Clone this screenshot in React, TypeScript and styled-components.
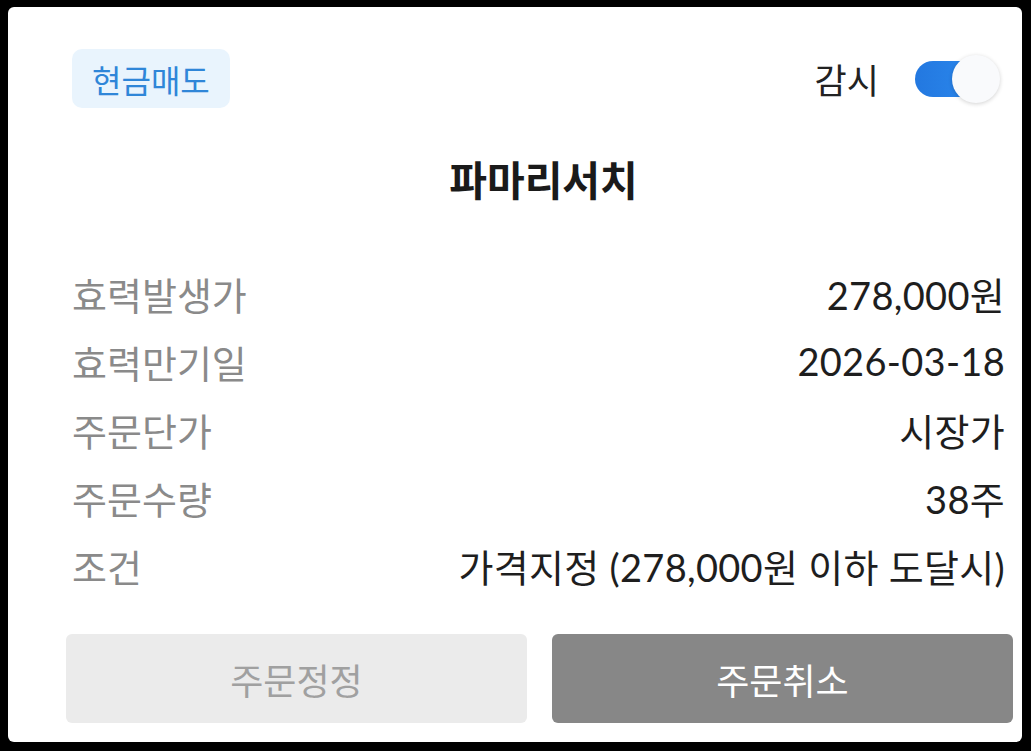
import React, { useState } from "react";
import styled, { createGlobalStyle } from "styled-components";

const GlobalStyle = createGlobalStyle`
  html, body {
    margin: 0;
    padding: 0;
    background: #000;
  }
  body {
    font-family: Lato, "Noto Sans CJK KR", sans-serif;
  }
`;

/*
  Styled Components
*/

const Screen = styled.div`
  width: 1031px;
  height: 751px;
  box-sizing: border-box;
  padding: 7px 9px 9px 8px;
`;

const Card = styled.div`
  height: 100%;
  box-sizing: border-box;
  background: #fff;
  border-radius: 6px;
  padding: 42px 9px 19px 58px;
  display: flex;
  flex-direction: column;
`;

const Body = styled.div`
  flex: 1;
  padding: 0 8px 0 6px;
  display: flex;
  flex-direction: column;
`;

const TopBar = styled.div`
  display: flex;
  align-items: center;
  justify-content: space-between;
  height: 59px;
`;

const Badge = styled.div`
  height: 59px;
  padding: 0 20px;
  display: flex;
  align-items: center;
  border-radius: 10px;
  background: #e9f4fd;
  color: #2f86d8;
  font-size: 32px;
`;

const WatchGroup = styled.div`
  display: flex;
  align-items: center;
  gap: 36px;
  padding-right: 10px;
  font-size: 35px;
  color: #222;
`;

const SwitchTrack = styled.button<{ $on: boolean }>`
  position: relative;
  width: 80px;
  height: 36px;
  padding: 0;
  border: none;
  border-radius: 18px;
  background: ${(p) =>
    p.$on ? "linear-gradient(90deg, #2378e0, #2d8cf0)" : "#d4d4d4"};
  cursor: pointer;
`;

const SwitchKnob = styled.span<{ $on: boolean }>`
  position: absolute;
  top: -6px;
  left: ${(p) => (p.$on ? "37px" : "-2px")};
  width: 48px;
  height: 48px;
  border-radius: 50%;
  background: #f9fafc;
  box-shadow: 0 1px 4px rgba(0, 0, 0, 0.18);
`;

const Title = styled.h1`
  margin: 46px 0 0;
  padding-left: 10px;
  text-align: center;
  font-size: 41px;
  font-weight: 700;
  color: #1a1a1a;
  line-height: 54px;
`;

const InfoList = styled.dl`
  margin: 51px 0 0;
  display: flex;
  flex-direction: column;
`;

const InfoRow = styled.div`
  display: flex;
  justify-content: space-between;
  align-items: center;
  height: 68px;
  font-size: 38px;
`;

const Label = styled.dt`
  color: #8a8a8a;
`;

const Value = styled.dd`
  margin: 0;
  color: #1e1e1e;
  letter-spacing: 0.3px;
`;

const ButtonRow = styled.div`
  display: grid;
  grid-template-columns: 1fr 1fr;
  gap: 25px;
  height: 89px;
`;

const ActionButton = styled.button<{ $primary?: boolean }>`
  border: none;
  border-radius: 6px;
  font-family: inherit;
  font-size: 36px;
  background: ${(p) => (p.$primary ? "#878787" : "#ebebeb")};
  color: ${(p) => (p.$primary ? "#fff" : "#a0a0a0")};
  cursor: pointer;
`;

const rows = [
  { label: "효력발생가", value: "278,000원" },
  { label: "효력만기일", value: "2026-03-18" },
  { label: "주문단가", value: "시장가" },
  { label: "주문수량", value: "38주" },
  { label: "조건", value: "가격지정 (278,000원 이하 도달시)" },
];

function App() {
  const [watching, setWatching] = useState(true);

  return (
    <Screen>
      <GlobalStyle />
      <Card>
        <Body>
          <TopBar>
            <Badge>현금매도</Badge>
            <WatchGroup>
              감시
              <SwitchTrack $on={watching} onClick={() => setWatching(!watching)}>
                <SwitchKnob $on={watching} />
              </SwitchTrack>
            </WatchGroup>
          </TopBar>
          <Title>파마리서치</Title>
          <InfoList>
            {rows.map((row) => (
              <InfoRow key={row.label}>
                <Label>{row.label}</Label>
                <Value>{row.value}</Value>
              </InfoRow>
            ))}
          </InfoList>
        </Body>
        <ButtonRow>
          <ActionButton>주문정정</ActionButton>
          <ActionButton $primary>주문취소</ActionButton>
        </ButtonRow>
      </Card>
    </Screen>
  );
}

export default App;
